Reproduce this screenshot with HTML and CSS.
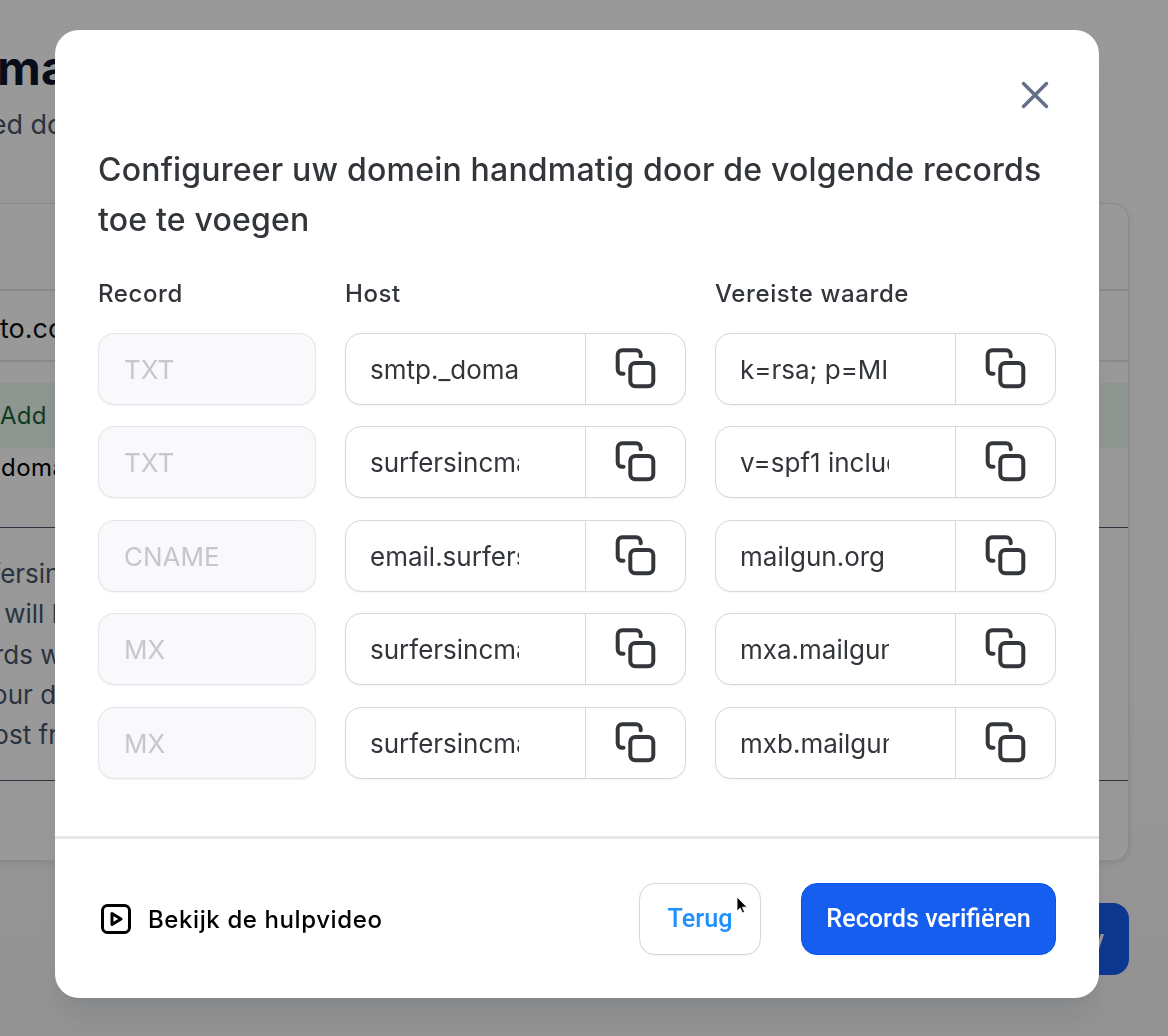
FILE: index.html
```html
<!DOCTYPE html>
<html lang="nl">
<head>
<meta charset="utf-8">
<title>Domein configureren</title>
<link rel="stylesheet" href="styles.css">
</head>
<body>
<div class="page">
  <h1 class="page-title">Domains</h1>
  <p class="page-sub">Verified domains</p>
  <section class="card">
    <div class="card-head"></div>
    <div class="row-domain">pluto.com</div>
    <div class="spacer"></div>
    <div class="banner">Add domain</div>
    <div class="row-name">domain</div>
    <div class="info">
      <p class="l1">surfersinc</p>
      <p class="l2">It will be</p>
      <p class="l3">records will</p>
      <p class="l4">your domain</p>
      <p class="l5">host from</p>
    </div>
  </section>
  <div class="page-actions"><button class="verify-bg">Verify</button></div>
</div>

<div class="overlay">
  <div class="modal">
    <div class="modal-body">
      <div class="close-row">
        <svg class="close" width="28" height="28" viewBox="0 0 28 28"><path d="M2.5 2.5 25.500 25.500M25.500 2.500 2.500 25.500"/></svg>
      </div>
      <h2 class="title">Configureer uw domein handmatig door de volgende records toe te voegen</h2>
      <div class="grid">
        <div class="label">Record</div><div class="label">Host</div><div class="label">Vereiste waarde</div>

        <div class="field-off">TXT</div>
        <div class="field"><div class="val">smtp._domainkey.surfersincmail.com</div><div class="copy"><svg class="ci" width="44" height="44" viewBox="0 0 44 44"><path d="M9.500 26.800H8.200a4.500 4.500 0 0 1-4.500-4.500V7.800a4.500 4.500 0 0 1 4.500-4.500h14a4.500 4.500 0 0 1 4.500 4.500v1.500"/><rect x="16.300" y="16" width="23" height="23.300" rx="5"/></svg></div></div>
        <div class="field"><div class="val">k=rsa; p=MIGfMA0GCSqGSIb3</div><div class="copy"><svg class="ci" width="44" height="44" viewBox="0 0 44 44"><path d="M9.500 26.800H8.200a4.500 4.500 0 0 1-4.500-4.500V7.800a4.500 4.500 0 0 1 4.500-4.500h14a4.500 4.500 0 0 1 4.500 4.500v1.500"/><rect x="16.300" y="16" width="23" height="23.300" rx="5"/></svg></div></div>

        <div class="field-off">TXT</div>
        <div class="field"><div class="val">surfersincmail.com</div><div class="copy"><svg class="ci" width="44" height="44" viewBox="0 0 44 44"><path d="M9.500 26.800H8.200a4.500 4.500 0 0 1-4.500-4.500V7.800a4.500 4.500 0 0 1 4.500-4.500h14a4.500 4.500 0 0 1 4.500 4.500v1.500"/><rect x="16.300" y="16" width="23" height="23.300" rx="5"/></svg></div></div>
        <div class="field"><div class="val">v=spf1 include:mailgun.org ~all</div><div class="copy"><svg class="ci" width="44" height="44" viewBox="0 0 44 44"><path d="M9.500 26.800H8.200a4.500 4.500 0 0 1-4.500-4.500V7.800a4.500 4.500 0 0 1 4.500-4.500h14a4.500 4.500 0 0 1 4.500 4.500v1.500"/><rect x="16.300" y="16" width="23" height="23.300" rx="5"/></svg></div></div>

        <div class="field-off">CNAME</div>
        <div class="field"><div class="val">email.surfersincmail.com</div><div class="copy"><svg class="ci" width="44" height="44" viewBox="0 0 44 44"><path d="M9.500 26.800H8.200a4.500 4.500 0 0 1-4.500-4.500V7.800a4.500 4.500 0 0 1 4.500-4.500h14a4.500 4.500 0 0 1 4.500 4.500v1.500"/><rect x="16.300" y="16" width="23" height="23.300" rx="5"/></svg></div></div>
        <div class="field"><div class="val">mailgun.org</div><div class="copy"><svg class="ci" width="44" height="44" viewBox="0 0 44 44"><path d="M9.500 26.800H8.200a4.500 4.500 0 0 1-4.500-4.500V7.800a4.500 4.500 0 0 1 4.500-4.500h14a4.500 4.500 0 0 1 4.500 4.500v1.500"/><rect x="16.300" y="16" width="23" height="23.300" rx="5"/></svg></div></div>

        <div class="field-off">MX</div>
        <div class="field"><div class="val">surfersincmail.com</div><div class="copy"><svg class="ci" width="44" height="44" viewBox="0 0 44 44"><path d="M9.500 26.800H8.200a4.500 4.500 0 0 1-4.500-4.500V7.800a4.500 4.500 0 0 1 4.500-4.500h14a4.500 4.500 0 0 1 4.500 4.500v1.500"/><rect x="16.300" y="16" width="23" height="23.300" rx="5"/></svg></div></div>
        <div class="field"><div class="val">mxa.mailgun.org</div><div class="copy"><svg class="ci" width="44" height="44" viewBox="0 0 44 44"><path d="M9.500 26.800H8.200a4.500 4.500 0 0 1-4.500-4.500V7.800a4.500 4.500 0 0 1 4.500-4.500h14a4.500 4.500 0 0 1 4.500 4.500v1.500"/><rect x="16.300" y="16" width="23" height="23.300" rx="5"/></svg></div></div>

        <div class="field-off">MX</div>
        <div class="field"><div class="val">surfersincmail.com</div><div class="copy"><svg class="ci" width="44" height="44" viewBox="0 0 44 44"><path d="M9.500 26.800H8.200a4.500 4.500 0 0 1-4.500-4.500V7.800a4.500 4.500 0 0 1 4.500-4.500h14a4.500 4.500 0 0 1 4.500 4.500v1.500"/><rect x="16.300" y="16" width="23" height="23.300" rx="5"/></svg></div></div>
        <div class="field"><div class="val">mxb.mailgun.org</div><div class="copy"><svg class="ci" width="44" height="44" viewBox="0 0 44 44"><path d="M9.500 26.800H8.200a4.500 4.500 0 0 1-4.500-4.500V7.800a4.500 4.500 0 0 1 4.500-4.500h14a4.500 4.500 0 0 1 4.500 4.500v1.500"/><rect x="16.300" y="16" width="23" height="23.300" rx="5"/></svg></div></div>
      </div>
    </div>
    <div class="modal-foot">
      <a class="help">
        <svg class="play" width="34" height="34" viewBox="0 0 34 34"><rect x="3.500" y="3.500" width="27" height="27" rx="5"/><path d="M13 11.500v11l9-5.500z"/></svg>
        <span>Bekijk de hulpvideo</span>
      </a>
      <div class="actions">
        <button class="btn-back">Terug</button>
        <button class="btn-primary">Records verifiëren</button>
      </div>
      <svg class="cursor" width="14" height="20" viewBox="0 0 14 20"><path d="M2 1v14l3.200-3 2.300 5 2-1-2.200-4.800H12z"/></svg>
    </div>
  </div>
</div>
</body>
</html>
```
FILE: styles.css
```css
* { box-sizing: border-box; }
html, body { margin: 0; height: 100%; }
body {
  width: 1168px;
  height: 1036px;
  overflow: hidden;
  background: linear-gradient(#fff 0, #fff 60%, #f4f4f5 100%);
  font-family: Inter, "Liberation Sans", sans-serif;
}

/* page behind the dialog */
.page { width: 1129px; height: 1036px; }
.page-title {
  margin: 0; height: 95px; padding-top: 36px;
  margin-left: -67px;
  font-size: 48px; line-height: 64px; font-weight: 700; color: #0f172a;
}
.page-sub {
  margin: 0; height: 108px; padding-top: 10px;
  margin-left: -76px;
  font-size: 27px; line-height: 40px; color: #475569;
  white-space: nowrap;
}
.card {
  height: 658px;
  margin-left: -40px;
  background: #fff;
  border: 1px solid #e5e7eb;
  border-radius: 16px;
  box-shadow: 0 2px 6px rgba(15, 23, 42, .1);
}
.card-head { height: 87px; border-bottom: 2px solid #e2e8f0; }
.row-domain {
  height: 71px; padding-left: 40px;
  border-bottom: 2px solid #e2e8f0;
  font-size: 27px; line-height: 76px; color: #111;
  text-indent: -40px;
}
.spacer { height: 21px; }
.banner {
  height: 65px; background: #eef9f1; color: #166534;
  font-size: 24px; line-height: 66px; padding-left: 39px; font-weight: 400;
  letter-spacing: .3px;
}
.row-name {
  height: 80px; padding-left: 40px;
  border-bottom: 1px solid #475569;
  font-size: 24px; line-height: 40px; letter-spacing: .5px; color: #000;
}
.info {
  height: 253px;
  padding-top: 26px;
  border-bottom: 1px solid #475569;
  font-size: 26px; line-height: 40.300px; color: #475569;
}
.info p { margin: 0; white-space: nowrap; }
.l1 { text-indent: -9px; }
.l2 { text-indent: 20px; }
.l3 { text-indent: -22px; }
.l4 { text-indent: 17px; }
.l5 { text-indent: 17px; }
.page-actions { display: flex; justify-content: flex-end; padding-top: 42px; }
.verify-bg {
  width: 200px; height: 72px;
  border: 0; border-radius: 16px;
  background: #155eef; color: #fff;
  font: 500 25px Roboto, sans-serif;
  text-align: right; padding-right: 25px;
}

/* dialog */
.overlay {
  position: fixed; inset: 0;
  display: flex;
  padding: 30px 69px 38px 55px;
  background: rgba(0, 0, 0, .4);
}
.modal {
  flex: 1;
  display: flex; flex-direction: column;
  background: #fff;
  border-radius: 24px;
  overflow: hidden;
  box-shadow: 0 20px 24px -4px rgba(16, 24, 40, .08), 0 8px 8px -4px rgba(16, 24, 40, .03);
}
.modal-body { height: 809px; padding: 0 43px; border-bottom: 3px solid #e5e7eb; }
.close-row { display: flex; justify-content: flex-end; padding-top: 51px; height: 115px; }
.close { margin-right: 7px; fill: none; stroke: #64708a; stroke-width: 3.500; stroke-linecap: round; }
.title {
  margin: 0; width: 960px; height: 100px;
  font-size: 32px; line-height: 50px; font-weight: 450; letter-spacing: .2px; color: #32363b;
}
.grid {
  margin-top: 30.200px;
  display: grid;
  grid-template-columns: 218px 341px 341px;
  grid-template-rows: 36px repeat(5, 72px);
  column-gap: 29px;
  row-gap: 21.500px;
}
.label { font-size: 24px; line-height: 38px; font-weight: 450; letter-spacing: .6px; color: #32363b; }
.field-off {
  height: 72px; padding-left: 25px;
  background: #f9f9fb;
  border: 1px solid #e3e4ec;
  border-radius: 16px;
  box-shadow: 0 1px 2px rgba(16, 24, 40, .05);
  font-size: 26px; line-height: 72px; color: #c6c7cc;
}
.field {
  height: 72px;
  display: flex;
  border: 1px solid #d5d7e2;
  border-radius: 16px;
  box-shadow: 0 1px 2px rgba(16, 24, 40, .05);
  background: #fff;
}
.val {
  flex: none;
  margin-left: 24px;
  width: 149px;
  overflow: hidden; white-space: nowrap;
  font-size: 26px; line-height: 72px; color: #32363b;
}
.copy {
  margin-left: auto;
  width: 100px; flex: none;
  display: flex; align-items: center; justify-content: center;
  border-left: 1px solid #d5d7e2;
}
.ci { fill: none; stroke: #33363a; stroke-width: 4; stroke-linecap: round; }

.modal-foot {
  position: relative;
  flex: 1;
  display: flex; align-items: center; justify-content: space-between;
  padding: 1px 43px 0 44px;
}
.help { display: flex; align-items: center; gap: 15px; font-size: 24px; font-weight: 500; letter-spacing: .6px; color: #000; }
.play { fill: none; stroke: #000; stroke-width: 3; stroke-linejoin: round; }
.actions { display: flex; gap: 40px; }
.btn-back, .btn-primary {
  height: 72px; border-radius: 16px;
  font: 500 25.200px/1 Roboto, sans-serif;
  box-shadow: 0 1px 2px rgba(16, 24, 40, .05);
}
.btn-back { width: 122px; background: #fff; color: #1e90ff; border: 1px solid #d5d7e2; }
.btn-primary { width: 255px; background: #155eef; color: #fff; border: 1px solid #0a54e6; }
.cursor { position: absolute; left: 680px; top: 57px; fill: #000; stroke: #fff; stroke-width: .8; }
```
